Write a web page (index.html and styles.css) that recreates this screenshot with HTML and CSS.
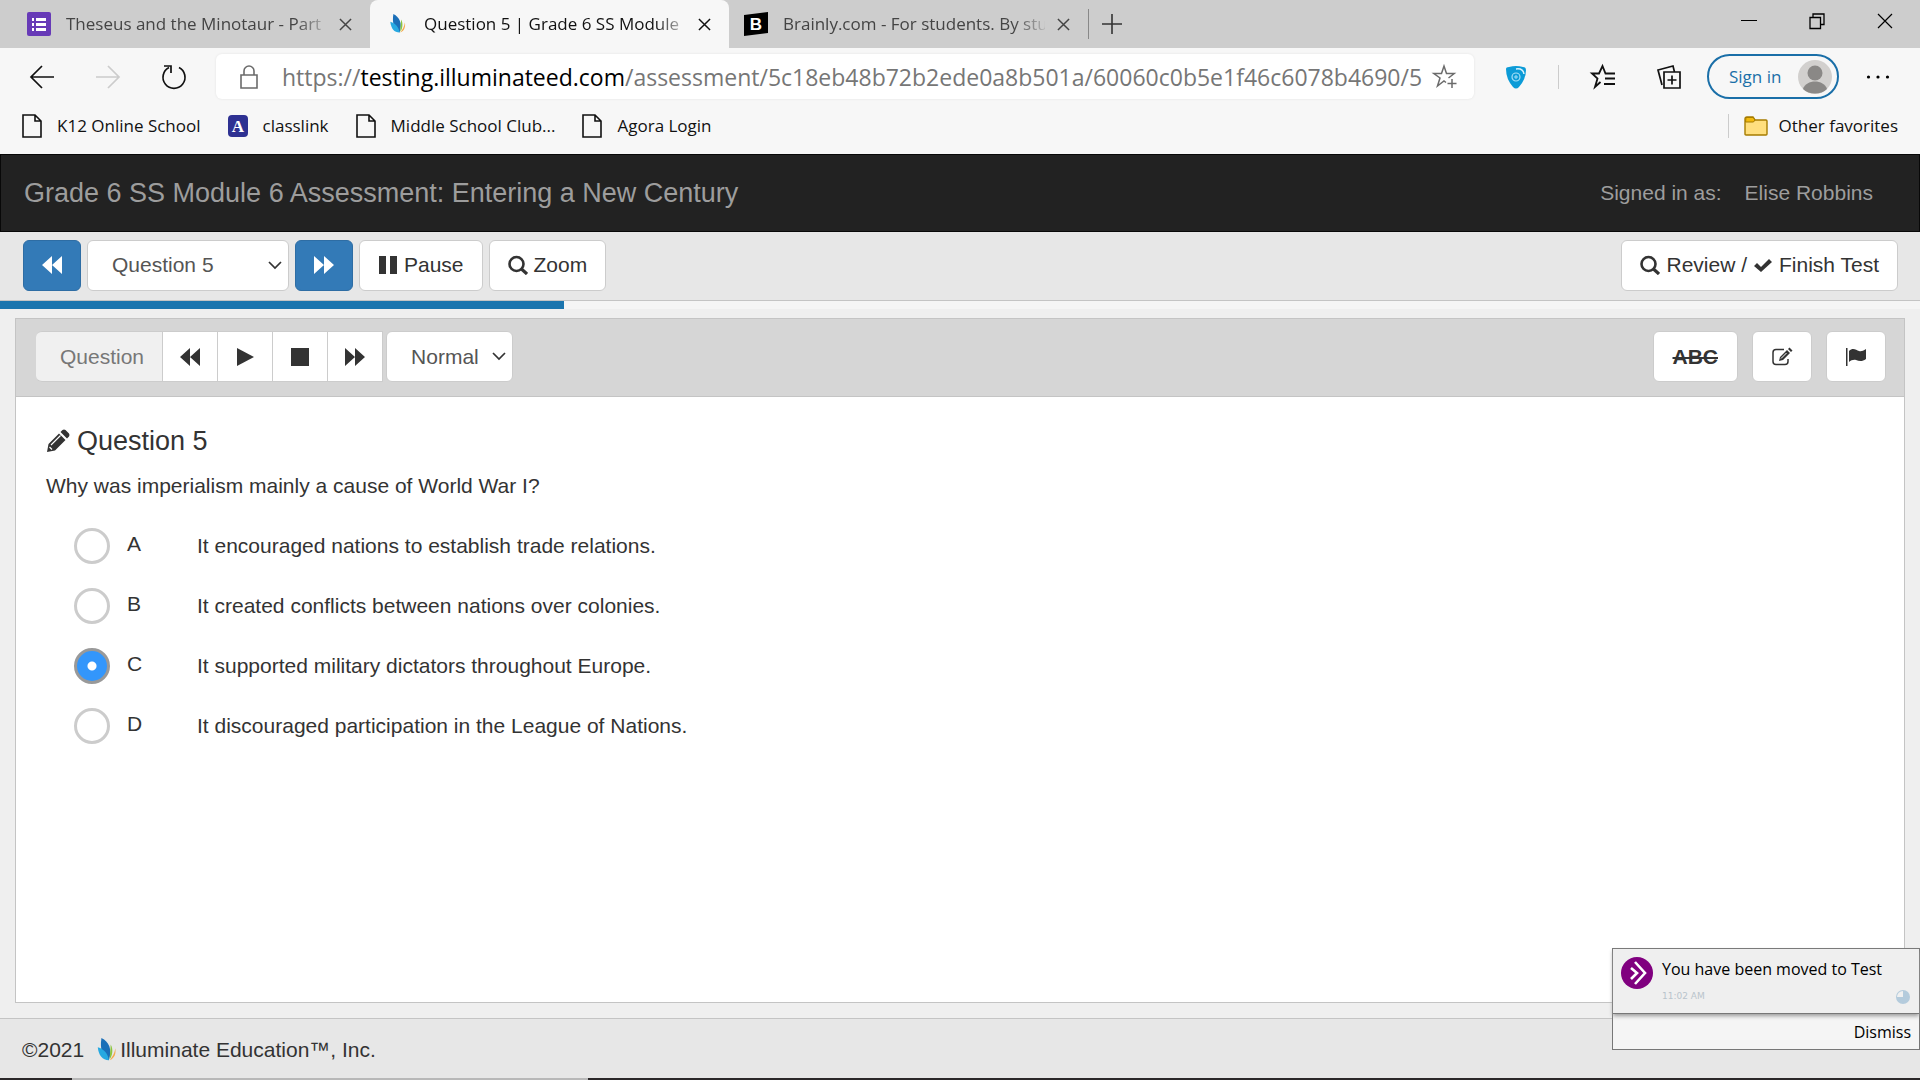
FILE: index.html
```
<!DOCTYPE html>
<html lang="en">
<head>
  <meta charset="UTF-8">
  <meta name="viewport" content="width=device-width, initial-scale=1.0">
  <title>Question 5 | Grade 6 SS Module 6 Assessment</title>
  <link rel="stylesheet" href="styles.css">
</head>
<body>
  <!-- Shared icons -->
  <svg class="sprite" aria-hidden="true">
    <symbol id="i-close" viewBox="0 0 14 14"><path d="M1 1l12 12M13 1L1 13" fill="none" stroke="currentColor" stroke-width="1.6"/></symbol>
    <symbol id="i-page" viewBox="0 0 20 24"><path d="M1 1h12l6 6v16H1zM13 1v6h6" fill="none" stroke="currentColor" stroke-width="1.6"/></symbol>
    <symbol id="i-leaf" viewBox="0 0 20 26">
      <path d="M4 0c8 4 12 12 8 24C5 20 2 12 4 0z" fill="#1b6fb8"/>
      <path d="M0 10c7 2 11 7 12 14C5 24 1 19 0 10z" fill="#27a9e1"/>
      <path d="M14 7c3 5 2 12-1 16 0-6 1-11 1-16z" fill="#8cc63f"/>
      <path d="M19 11c1 6-1 11-6 13 3-4 5-7 6-13z" fill="#f5a94a"/>
    </symbol>
    <symbol id="i-backward" viewBox="0 0 20 20"><path d="M10 1v18L0 10zM20 1v18l-10-9z" fill="currentColor"/></symbol>
    <symbol id="i-forward" viewBox="0 0 20 20"><path d="M0 1v18l10-9zM10 1v18l10-9z" fill="currentColor"/></symbol>
    <symbol id="i-search" viewBox="0 0 20 20"><circle cx="8.5" cy="9" r="7" fill="none" stroke="currentColor" stroke-width="2.6"/><path d="M13.5 14l5.500 5" stroke="currentColor" stroke-width="3.200"/></symbol>
    <symbol id="i-chevron" viewBox="0 0 14 9"><path d="M1 1l6 6 6-6" fill="none" stroke="currentColor" stroke-width="1.7"/></symbol>
  </svg>

  <div class="tab-bar">
    <div class="tab">
      <svg class="favicon" viewBox="0 0 24 24"><rect width="24" height="24" rx="2" fill="#673ab7"/><path d="M5 6h2v3H5zM5 11h2v3H5zM5 16h2v3H5zM9 6h10v3H9zM9 11h10v3H9zM9 16h10v3H9z" fill="#fff"/></svg>
      <span class="tab-title">Theseus and the Minotaur - Part</span>
      <button class="tab-close" aria-label="Close tab"><svg><use href="#i-close"/></svg></button>
    </div>
    <div class="tab active">
      <svg class="favicon leaf"><use href="#i-leaf"/></svg>
      <span class="tab-title">Question 5 | Grade 6 SS Module</span>
      <button class="tab-close" aria-label="Close tab"><svg><use href="#i-close"/></svg></button>
    </div>
    <div class="tab">
      <svg class="favicon" viewBox="0 0 24 24"><path d="M0 3l24-3v21L0 24z" fill="#000"/><text x="12" y="18" class="brainly-b">B</text></svg>
      <span class="tab-title">Brainly.com - For students. By stu</span>
      <button class="tab-close" aria-label="Close tab"><svg><use href="#i-close"/></svg></button>
    </div>
    <button class="new-tab" aria-label="New tab"><svg viewBox="0 0 20 20"><path d="M10 0v20M0 10h20" stroke="#333" stroke-width="1.6"/></svg></button>
    <div class="window-buttons">
      <button aria-label="Minimize"><svg viewBox="0 0 16 16"><path d="M0 7.500h16" stroke="#000"/></svg></button>
      <button aria-label="Restore"><svg viewBox="0 0 16 16"><path d="M1 4.500h10.500v11H1zM4 4V1h11v10.500h-3" fill="none" stroke="#000" stroke-width="1.300"/></svg></button>
      <button aria-label="Close"><svg viewBox="0 0 16 16"><path d="M1 1l14 14M15 1L1 15" stroke="#000" stroke-width="1.200"/></svg></button>
    </div>
  </div>

  <div class="nav-bar">
    <button class="nav-btn" aria-label="Back"><svg viewBox="0 0 24 24"><path d="M24 12H1M12 1L1 12l11 11" fill="none" stroke="#111" stroke-width="1.700"/></svg></button>
    <button class="nav-btn disabled" aria-label="Forward"><svg viewBox="0 0 24 24"><path d="M0 12h23M12 1l11 11-11 11" fill="none" stroke="currentColor" stroke-width="1.700"/></svg></button>
    <button class="nav-btn" aria-label="Refresh"><svg viewBox="0 0 24 24"><path d="M17 2.500a11 11 0 1 1-10 0M2 1h7v7" fill="none" stroke="#111" stroke-width="1.700"/></svg></button>
    <div class="address">
      <svg class="lock" viewBox="0 0 18 24"><path d="M1 10h16v13H1zM4 10V6a5 5 0 0 1 10 0v4" fill="none" stroke="#6b6b6b" stroke-width="1.600"/></svg>
      <div class="url">https://<b>testing.illuminateed.com</b>/assessment/5c18eb48b72b2ede0a8b501a/60060c0b5e1f46c6078b4690/5</div>
      <button aria-label="Add to favorites"><svg viewBox="0 0 24 24"><path d="M13 17.500l-2-1.500-6.500 5L7 13 .8 8.500h7.700L11 1l2.500 7.500h7.700L15.500 13M19 14v9M14.500 18.500h9" fill="none" stroke="#6b6b6b" stroke-width="1.500"/></svg></button>
    </div>
    <div class="nav-tools">
      <button class="shield" aria-label="Extension"><svg viewBox="0 0 20 24"><path d="M0 4Q0 2 3 2 10 0 17 2q3 0 3 3 0 9-7 17-3 3-6 0Q0 14 0 4z" fill="#0c9bd7"/><circle cx="10" cy="12" r="4" fill="none" stroke="#a6e0f7" stroke-width="1.200"/><path d="M8 12h4M10 10v4" stroke="#a6e0f7"/><path d="M10 4q7-1 8 5" fill="none" stroke="#d9f2fc" stroke-width="1.500"/></svg></button>
      <span class="divider"></span>
      <button aria-label="Favorites"><svg viewBox="0 0 24 24"><path d="M9.500 17L4 22l2.500-8.500L1 8.500h7L11.500 1l3 7.500H24M14 13.500h10M13 19h11" fill="none" stroke="#111" stroke-width="1.800"/></svg></button>
      <button aria-label="Collections"><svg viewBox="0 0 24 24"><path d="M7 7h16v16H7zM15 10.500v9M10.500 15h9M5 20L1 5l15-4 1.500 6" fill="none" stroke="#111" stroke-width="1.700"/></svg></button>
      <button class="sign-in">Sign in
        <svg viewBox="0 0 34 34"><circle cx="17" cy="17" r="17" fill="#d2d0ce"/><circle cx="17" cy="13" r="7.500" fill="#8a8886"/><path d="M5 29c3-10 21-10 24 0-6 6-18 6-24 0z" fill="#8a8886"/></svg>
      </button>
      <button class="more" aria-label="Settings and more"><svg viewBox="0 0 24 24"><circle cx="2.500" cy="12" r="1.600"/><circle cx="12" cy="12" r="1.600"/><circle cx="21.500" cy="12" r="1.600"/></svg></button>
    </div>
  </div>

  <div class="favorites-bar">
    <a href="#"><svg><use href="#i-page"/></svg>K12 Online School</a>
    <a href="#"><svg viewBox="0 0 20 24"><rect y="1" width="20" height="22" rx="4" fill="#2e3192"/><text x="10" y="18" class="classlink-a">A</text></svg>classlink</a>
    <a href="#"><svg><use href="#i-page"/></svg>Middle School Club...</a>
    <a href="#"><svg><use href="#i-page"/></svg>Agora Login</a>
    <a href="#" class="other"><svg viewBox="0 0 24 20"><path d="M1 3q0-2 2-2h6l2 3h11q1 0 1 1v13q0 1-1 1H2q-1 0-1-1z" fill="#ffdf7e" stroke="#a67c00" stroke-width="1.400"/><path d="M1.500 6h8l1.500-2-2-2.500H2z" fill="#f2b90d" stroke="#a67c00"/></svg>Other favorites</a>
  </div>

  <header class="site-header">
    <h1>Grade 6 SS Module 6 Assessment: Entering a New Century</h1>
    <div class="signed-in"><span>Signed in as:</span><span>Elise Robbins</span></div>
  </header>

  <div class="test-nav">
    <button class="btn primary" aria-label="Previous question"><svg class="ico"><use href="#i-backward"/></svg></button>
    <div class="select-wrap question-select">
      <select aria-label="Question"><option>Question 5</option></select>
      <svg><use href="#i-chevron"/></svg>
    </div>
    <button class="btn primary" aria-label="Next question"><svg class="ico"><use href="#i-forward"/></svg></button>
    <button class="btn"><svg class="ico" viewBox="0 0 20 20"><path d="M1 1h7v18H1zM12 1h7v18h-7z" fill="currentColor"/></svg>Pause</button>
    <button class="btn"><svg class="ico"><use href="#i-search"/></svg>Zoom</button>
    <button class="btn finish"><svg class="ico"><use href="#i-search"/></svg>Review / <svg class="ico" viewBox="0 0 20 20"><path d="M1 11l3-3 4 4 8-8 3 3L8 17z" fill="currentColor"/></svg>Finish Test</button>
  </div>
  <div class="progress"><div class="progress-bar" style="width: 29.4%"></div></div>

  <main class="panel">
    <div class="panel-header">
      <div class="audio">
        <button class="btn label" disabled>Question</button>
        <button class="btn" aria-label="Rewind"><svg class="ico"><use href="#i-backward"/></svg></button>
        <button class="btn" aria-label="Play"><svg class="ico" viewBox="0 0 20 20"><path d="M2 1l17 9-17 9z" fill="currentColor"/></svg></button>
        <button class="btn" aria-label="Stop"><svg class="ico" viewBox="0 0 20 20"><path d="M1 1h18v18H1z" fill="currentColor"/></svg></button>
        <button class="btn" aria-label="Fast forward"><svg class="ico"><use href="#i-forward"/></svg></button>
        <div class="select-wrap speed-select">
          <select aria-label="Speed"><option>Normal</option></select>
          <svg><use href="#i-chevron"/></svg>
        </div>
      </div>
      <div class="tools">
        <button class="btn strike">ABC</button>
        <button class="btn" aria-label="Notes"><svg class="ico" viewBox="0 0 20 20"><path d="M12 2.500H4Q1 2.500 1 5.500v9q0 3 3 3h9q3 0 3-3V12" fill="none" stroke="currentColor" stroke-width="1.500"/><path d="M7 14l1-4 7-7 3 3-7 7zM16 2l1.500-1.500 3 3L19 5z" fill="currentColor"/><path d="M9 11.500l5.500-5.500" stroke="#fff"/></svg></button>
        <button class="btn" aria-label="Flag"><svg class="ico" viewBox="0 0 20 20"><path d="M0 1h1.500v18H0zM3 4c4-4 7-1 10 0 2 .6 4 0 7-2v10c-4 3-7 2-10 1-2-.6-5 0-7 2z" fill="currentColor"/></svg></button>
      </div>
    </div>

    <form class="question">
      <h2><svg class="pencil" viewBox="0 0 24 24"><path d="M1 23l1.500-8L13 4.500l6.500 6.500L9 21.500zM14.500 3l2-2q1.500-1 3 0L23 4.500q1 1.500 0 3l-2 2z" fill="currentColor"/><path d="M5 16L14.500 6.500M3.500 18l2.500 2.500" stroke="#fff" stroke-width="1.200"/></svg>Question 5</h2>
      <p>Why was imperialism mainly a cause of World War I?</p>
      <div class="choices">
        <label><input type="radio" name="answer"><span class="letter">A</span><span>It encouraged nations to establish trade relations.</span></label>
        <label><input type="radio" name="answer"><span class="letter">B</span><span>It created conflicts between nations over colonies.</span></label>
        <label><input type="radio" name="answer" checked><span class="letter">C</span><span>It supported military dictators throughout Europe.</span></label>
        <label><input type="radio" name="answer"><span class="letter">D</span><span>It discouraged participation in the League of Nations.</span></label>
      </div>
    </form>
  </main>

  <footer>©2021 <svg><use href="#i-leaf"/></svg>Illuminate Education™, Inc.</footer>
  <div class="taskbar"><span></span></div>

  <!-- Toast notification -->
  <div class="toast" role="status">
    <div class="toast-body">
      <svg class="toast-icon" viewBox="0 0 32 32"><circle cx="16" cy="16" r="16" fill="#80007f"/><path d="M10 11l6 5-6 6M14 5l10 11-10 11" fill="none" stroke="#fff" stroke-width="2.600"/></svg>
      <div class="toast-text">
        <p>You have been moved to Test</p>
        <time>11:02 AM</time>
      </div>
      <svg class="toast-timer" viewBox="0 0 16 16"><circle cx="8" cy="8" r="7" fill="#b4cbdc"/><path d="M8 8V2a6 6 0 0 0-6 6z" fill="#f0f0f0"/></svg>
    </div>
    <button class="dismiss">Dismiss</button>
  </div>
</body>
</html>
```
FILE: styles.css
```
* {
  margin: 0;
  padding: 0;
  box-sizing: border-box;
}

body {
  display: flex;
  flex-direction: column;
  min-height: 100vh;
  background-color: #efefef;
  color: #333;
  font-family: "Liberation Sans", Arial, sans-serif;
  font-size: 21px;
  line-height: 30px;
}

button, select {
  font: inherit;
  color: inherit;
  border: none;
  background: none;
  cursor: pointer;
}

svg {
  flex: none;
  overflow: visible;
}

.sprite {
  position: absolute;
  width: 0;
  height: 0;
}

/* Browser chrome */
.tab-bar, .nav-bar, .favorites-bar {
  display: flex;
  align-items: center;
  font-family: "Open Sans", "Noto Sans", sans-serif;
  font-size: 17px;
  line-height: 24px;
  color: #111;
}

.tab-bar {
  height: 48px;
  background-color: #cdcdcd;
}

.tab {
  display: flex;
  align-items: center;
  width: 359px;
  height: 48px;
  padding: 0 18px 0 15px;
  color: #444;
}

.tab:first-child {
  width: 370px;
  padding-left: 27px;
}

.tab.active {
  background-color: #f7f7f7;
  border-radius: 8px 8px 0 0;
  color: #111;
}

.favicon {
  width: 24px;
  height: 24px;
  margin-right: 15px;
}

.favicon.leaf {
  width: 16px;
  height: 20px;
  margin: 0 18px 0 5px;
}

.brainly-b, .classlink-a {
  font-family: "Liberation Serif", serif;
  font-weight: bold;
  font-size: 17px;
  fill: #fff;
  text-anchor: middle;
}

.brainly-b {
  font-family: "Liberation Sans", Arial, sans-serif;
}

.tab-title {
  flex: 1;
  overflow: hidden;
  white-space: nowrap;
  -webkit-mask-image: linear-gradient(to right, #000 88%, transparent 102%);
  mask-image: linear-gradient(to right, #000 88%, transparent 102%);
}

.tab-close {
  display: flex;
  margin-left: 12px;
}

.tab-close svg {
  width: 13px;
  height: 13px;
}

.new-tab {
  display: flex;
  height: 30px;
  align-items: center;
  padding-left: 13px;
  border-left: 1px solid #888;
}

.new-tab svg {
  width: 20px;
  height: 20px;
}

.window-buttons {
  display: flex;
  gap: 52px;
  margin-left: auto;
  padding: 0 27px 6px 0;
}

.window-buttons button, .nav-btn, .nav-tools button, .address button {
  display: flex;
  align-items: center;
}

.window-buttons svg {
  width: 16px;
  height: 16px;
}

.nav-bar {
  gap: 42px;
  height: 57px;
  padding: 0 30px;
  background-color: #f7f7f7;
}

.nav-bar svg {
  width: 24px;
  height: 24px;
}

.nav-btn.disabled {
  color: #ccc;
}

.address {
  display: flex;
  align-items: center;
  flex: 1;
  min-width: 0;
  height: 45px;
  margin-left: -12px;
  padding: 0 17px 0 24px;
  background-color: #fff;
  border-radius: 6px;
  box-shadow: 0 0 3px rgba(0, 0, 0, 0.08);
}

.address .lock {
  width: 18px;
}

.url {
  flex: 1;
  margin-left: 24px;
  overflow: hidden;
  white-space: nowrap;
  font-size: 23px;
  line-height: 32px;
  color: #767676;
}

.url b {
  font-weight: normal;
  color: #000;
}

.nav-tools {
  display: flex;
  align-items: center;
  margin-left: -10px;
}

.nav-tools .shield svg {
  width: 20px;
}

.divider {
  width: 1px;
  height: 24px;
  margin: 0 32px;
  background-color: #ccc;
}

.nav-tools button + button {
  margin-left: 42px;
}

.nav-tools button + .sign-in {
  justify-content: space-between;
  width: 132px;
  height: 45px;
  margin-left: 26px;
  padding: 0 5px 0 20px;
  border: 2px solid #1a6fa8;
  border-radius: 23px;
  color: #1a6fa8;
}

.sign-in svg {
  width: 34px;
  height: 34px;
}

.nav-tools button + .more {
  margin-left: 27px;
}

.favorites-bar {
  gap: 27px;
  height: 49px;
  padding: 0 22px 8px;
  background-color: #f7f7f7;
}

.favorites-bar a {
  display: flex;
  align-items: center;
  gap: 15px;
  color: inherit;
  text-decoration: none;
}

.favorites-bar svg {
  width: 20px;
  height: 24px;
}

.favorites-bar .other {
  gap: 11px;
  margin-left: auto;
  padding-left: 15px;
  border-left: 1px solid #ccc;
}

.favorites-bar .other svg {
  width: 24px;
}

/* Test header */
.site-header {
  display: flex;
  justify-content: space-between;
  align-items: center;
  height: 78px;
  padding: 0 46px 0 23px;
  background-color: #222;
  border: 1px solid #080808;
  color: #9d9d9d;
}

.site-header h1 {
  font-size: 27px;
  font-weight: normal;
}

.signed-in {
  display: flex;
  gap: 23px;
}

.test-nav {
  display: flex;
  align-items: center;
  gap: 6px;
  height: 69px;
  padding: 0 22px 2px 23px;
  background-color: #e7e7e7;
  border-bottom: 1px solid #c4c4c4;
}

.btn {
  display: flex;
  align-items: center;
  justify-content: center;
  gap: 6px;
  height: 51px;
  padding: 0 18px;
  background-color: #fff;
  border: 1px solid #ccc;
  border-radius: 6px;
}

.btn.primary {
  background-color: #337ab7;
  border-color: #2e6da4;
  color: #fff;
}

.finish {
  margin-left: auto;
}

.ico {
  width: 20px;
  height: 20px;
}

.select-wrap {
  position: relative;
}

.select-wrap select {
  width: 100%;
  height: 51px;
  padding: 0 24px;
  appearance: none;
  background-color: #fff;
  border: 1px solid #ccc;
  border-radius: 6px;
  color: #555;
}

.select-wrap svg {
  position: absolute;
  top: 21px;
  right: 7px;
  width: 14px;
  height: 9px;
  pointer-events: none;
}

.question-select {
  width: 202px;
}

.progress {
  height: 8px;
  background-color: #f5f5f5;
}

.progress-bar {
  height: 100%;
  background-color: #1b75ae;
}

.panel {
  flex: 1;
  margin: 9px 15px 15px;
  background-color: #fff;
  border: 1px solid #c4c4c4;
}

.panel-header {
  display: flex;
  justify-content: space-between;
  align-items: center;
  height: 78px;
  padding: 0 18px 2px 20px;
  background-color: #d6d6d6;
  border-bottom: 1px solid #c4c4c4;
}

.audio {
  display: flex;
}

.audio .btn {
  padding: 0 17px;
  border-radius: 0;
  border-left-width: 0;
}

.audio .label {
  padding: 0 18px 0 24px;
  background-color: #f0f0f0;
  border-radius: 6px 0 0 6px;
  color: #777;
}

.speed-select {
  width: 127px;
  margin-left: 3px;
}

.tools {
  display: flex;
  gap: 14px;
}

.tools .btn {
  padding: 0 19px;
}

.strike {
  font-weight: bold;
  text-decoration: line-through;
}

.question {
  padding: 29px 30px;
}

.question h2 {
  display: flex;
  align-items: center;
  gap: 7px;
  margin-bottom: 15px;
  font-size: 27px;
  font-weight: normal;
}

.pencil {
  width: 24px;
  height: 24px;
}

.choices {
  margin-top: 15px;
  padding-left: 28px;
}

.choices label {
  display: flex;
  align-items: center;
  height: 60px;
}

.choices input {
  appearance: none;
  width: 36px;
  height: 36px;
  border: 3px solid #ccc;
  border-radius: 50%;
  background-color: #fff;
}

.choices input:checked {
  border-color: #999;
  background: radial-gradient(circle, #fff 4px, #3396fb 5px);
}

.letter {
  width: 87px;
  padding: 0 0 4px 17px;
}

footer {
  display: flex;
  align-items: center;
  height: 60px;
  padding: 2px 22px 0;
  background-color: #e7e7e7;
  border-top: 1px solid #c4c4c4;
}

footer svg {
  width: 20px;
  height: 24px;
  margin: 0 3px 0 13px;
}

.taskbar {
  height: 2px;
  padding-left: 72px;
  background-color: #2b2829;
}

.taskbar span {
  display: block;
  width: 516px;
  height: 2px;
  background-color: #b8b8b8;
}

/* Toast */
.toast {
  position: fixed;
  right: 0;
  bottom: 30px;
  width: 308px;
  border: 1px solid #777;
  background-color: #f5f5f5;
  font-family: "Open Sans", "Noto Sans", sans-serif;
  font-size: 16px;
  line-height: 24px;
  color: #000;
}

.toast-body {
  display: flex;
  height: 65px;
  padding: 8px;
  background-color: #efefef;
  border-bottom: 1px solid #777;
  box-shadow: 0 2px 4px #999;
}

.toast-icon {
  width: 32px;
  height: 32px;
}

.toast-text {
  flex: 1;
  margin-left: 9px;
}

.toast time {
  display: block;
  font-family: "DejaVu Sans", sans-serif;
  font-size: 9px;
  line-height: 30px;
  color: #b9c4cc;
}

.toast-timer {
  align-self: flex-end;
  width: 16px;
  height: 16px;
}

.dismiss {
  display: block;
  width: 100%;
  height: 35px;
  padding-right: 8px;
  text-align: right;
}
```
